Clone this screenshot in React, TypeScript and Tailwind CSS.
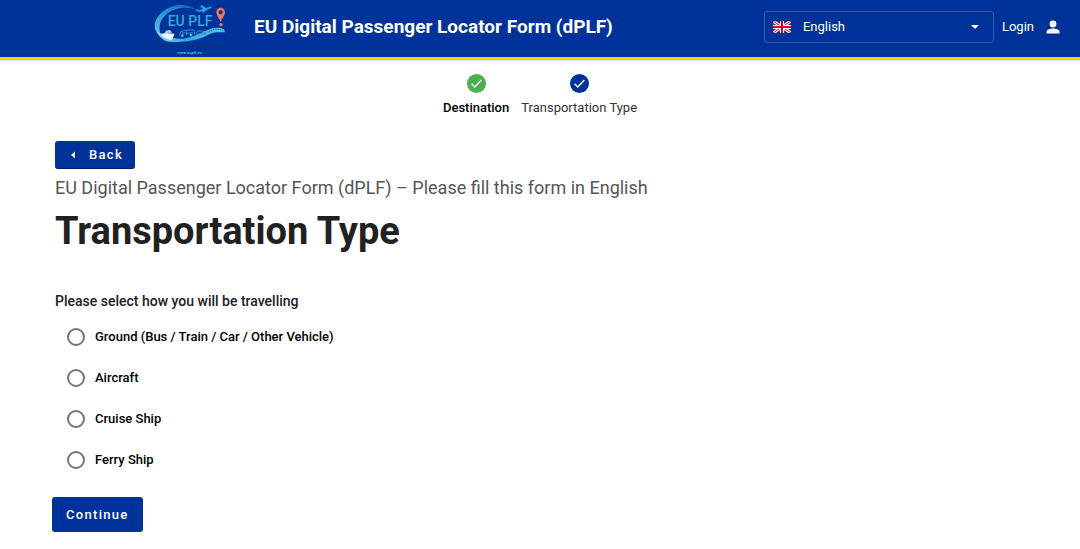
import { useState } from "react"

type Step = {
  label: string
  done: boolean
}

const steps: Step[] = [
  { label: "Destination", done: true },
  { label: "Transportation Type", done: false },
]

const transportOptions = [
  { value: "ground", label: "Ground (Bus / Train / Car / Other Vehicle)" },
  { value: "aircraft", label: "Aircraft" },
  { value: "cruise", label: "Cruise Ship" },
  { value: "ferry", label: "Ferry Ship" },
]

function Logo() {
  return (
    <svg viewBox="36 0 228 168" className="h-14 w-[76px] shrink-0" role="img" aria-label="EU PLF">
      <defs>
        <linearGradient id="ring" x1="1" y1="0" x2="0" y2="1">
          <stop offset="0" stopColor="#1560b8" />
          <stop offset="0.5" stopColor="#2398d2" />
          <stop offset="1" stopColor="#62c4e6" />
        </linearGradient>
        <linearGradient id="wave" x1="0" y1="0" x2="1" y2="0">
          <stop offset="0" stopColor="#8fdcf0" />
          <stop offset="0.4" stopColor="#2fa9da" />
          <stop offset="1" stopColor="#5cc3e8" />
        </linearGradient>
      </defs>
      {/* ring */}
      <path
        d="M170 26 C138 6 96 8 68 32 C38 56 36 90 66 108 C52 84 58 54 84 36 C108 18 142 16 170 26Z"
        fill="url(#ring)"
      />
      {/* wave */}
      <path
        d="M50 92 C58 108 70 118 84 122 C150 126 182 114 208 100 C224 92 240 94 254 94 C258 78 226 76 204 86 C170 102 138 118 104 112 C96 110 92 108 88 106Z"
        fill="url(#wave)"
      />
      <path d="M206 92 C222 82 238 82 248 90" fill="none" stroke="#003399" strokeWidth="2" strokeDasharray="4 3" />
      {/* ship */}
      <path d="M62 100 L76 96 L104 98 L96 116 C84 118 70 112 62 100Z" fill="#eef9fd" />
      <path d="M74 96 L78 89 L90 87 L96 95Z" fill="#a9dcf0" />
      {/* plane */}
      <path
        d="M166 26 L171 25 L177 28 L188 24 L180 14 L185 13 L199 21 L211 17 C216 16 217 19 213 21 L201 27 L190 35 L185 35 L190 30 L174 33Z"
        fill="#2ba3d6"
      />
      {/* train and car */}
      <path
        d="M118 106 L122 92 L136 88 L162 87 L164 100 M126 96 H160 M140 89 V102 M168 97 L174 90 H188 L196 95 V99 H168"
        fill="none"
        stroke="#2f8fcb"
        strokeWidth="3"
      />
      <circle cx="127" cy="104" r="4" fill="#5cbfe4" />
      <circle cx="153" cy="102" r="4" fill="#5cbfe4" />
      {/* map pin */}
      <path
        fillRule="evenodd"
        d="M242 20 C234 20 229 27 229 34 C229 44 238 51 242 63 C246 51 255 44 255 34 C255 27 250 20 242 20Z M242 28 A6 6 0 1 1 242 40 A6 6 0 1 1 242 28Z"
        fill="#ef765c"
      />
      <circle cx="243" cy="71" r="5" fill="#ef765c" />
      <text x="83" y="76" fontSize="42" fontFamily="Roboto, sans-serif" fontWeight="500" fill="#35a9dc">
        EU PLF
      </text>
      <text x="51" y="142" fontSize="11" fontFamily="Roboto, sans-serif" fontWeight="700" fill="#1c2f63">
        European Union Passenger Locator Form
      </text>
      <text x="112" y="160" fontSize="12" fontFamily="Roboto, sans-serif" fontWeight="700" fill="#45b8e6">
        www.euplf.eu
      </text>
    </svg>
  )
}

function UkFlag() {
  return (
    <svg
      viewBox="0 0 18 12"
      className="pointer-events-none absolute left-[9px] top-[10px] h-3 w-[18px]"
      aria-hidden="true"
    >
      <path d="M0 0H18V12H0Z" fill="#29337a" />
      <path d="M0 0L18 12M18 0L0 12" stroke="#fff" strokeWidth="3" />
      <path d="M0 0L18 12M18 0L0 12" stroke="#d80027" strokeWidth="1" />
      <path d="M9 0V12M0 6H18" stroke="#fff" strokeWidth="4" />
      <path d="M9 0V12M0 6H18" stroke="#d80027" strokeWidth="2" />
    </svg>
  )
}

function Header() {
  return (
    <header className="flex h-[60px] items-center border-b-[3px] border-[#ffcc00] bg-[#003399] pl-[152px] pr-5 text-white shadow">
      <Logo />
      <h2 className="ml-[26px] whitespace-nowrap pb-1 text-[19px] font-bold leading-6">
        EU Digital Passenger Locator Form (dPLF)
      </h2>
      <div className="ml-auto flex items-center pb-1">
        <div className="relative w-[230px]">
          <select
            aria-label="Language"
            className="h-8 w-full appearance-none rounded-[3px] border border-[#335cad] bg-[#003399] pl-[38px] pr-8 text-[13px] text-white"
          >
            <option>English</option>
          </select>
          <UkFlag />
          <svg
            viewBox="0 0 8 4"
            className="pointer-events-none absolute right-[15px] top-[14px] h-1 w-2"
            aria-hidden="true"
          >
            <path d="M0 0H8L4 4Z" fill="#fff" />
          </svg>
        </div>
        <a href="#login" className="ml-2 flex items-center gap-3 text-[13px] leading-5">
          Login
          <svg viewBox="0 0 14 14" className="h-[14px] w-[14px]" fill="#fff" aria-hidden="true">
            <circle cx="7" cy="4" r="3.4" />
            <path d="M0.5 13.4V11.6C0.5 9.4 4.6 8.4 7 8.4S13.5 9.4 13.5 11.6V13.4Z" />
          </svg>
        </a>
      </div>
    </header>
  )
}

function Stepper() {
  return (
    <ol className="flex justify-center gap-3 pt-[14px]">
      {steps.map((step) => (
        <li
          key={step.label}
          className={
            step.done
              ? "flex flex-col items-center gap-[5px] text-[13px] font-medium leading-5 text-black"
              : "flex flex-col items-center gap-[5px] text-[13px] leading-5 text-[#333]"
          }
        >
          <svg viewBox="0 0 19 19" className="h-[19px] w-[19px]" aria-hidden="true">
            <circle cx="9.5" cy="9.5" r="9.5" fill={step.done ? "#4caf50" : "#003399"} />
            <path d="M4.6 9.8L7.8 12.9L14.4 6.1" fill="none" stroke="#fff" strokeWidth="1.4" />
          </svg>
          {step.label}
        </li>
      ))}
    </ol>
  )
}

export default function App() {
  const [transport, setTransport] = useState("")

  return (
    <div className="bg-white font-['Roboto',sans-serif] text-[#212121]">
      <Header />
      <Stepper />

      <main className="px-[55px] pb-4 pt-[23px]">
        <button
          type="button"
          className="flex h-7 items-center gap-[14px] rounded-[3px] border-b border-[#001f66] bg-[#003399] pl-4 pr-3 text-[13px] font-medium tracking-widest text-white"
        >
          <svg viewBox="0 0 4 8" className="h-2 w-1" aria-hidden="true">
            <path d="M4 0.5V7.5L0 4Z" fill="#fff" />
          </svg>
          Back
        </button>

        <p className="mt-[7px] text-[18px] leading-6 text-[#555]">
          EU Digital Passenger Locator Form (dPLF) – Please fill this form in English
        </p>
        <h1 className="mt-[5px] text-[38px] font-bold leading-[52px] text-[#212121]">Transportation Type</h1>

        <form className="mt-[34px]" onSubmit={(e) => e.preventDefault()}>
          <fieldset>
            <legend className="text-[14px] font-medium leading-5">
              Please select how you will be travelling
            </legend>
            <div className="mt-[5px] pl-3">
              {transportOptions.map((option) => (
                <label
                  key={option.value}
                  className="flex h-[41px] w-fit items-center gap-[10px] text-[13px] font-medium text-black"
                >
                  <input
                    type="radio"
                    name="transport"
                    value={option.value}
                    checked={transport === option.value}
                    onChange={() => setTransport(option.value)}
                    className="h-[18px] w-[18px] appearance-none rounded-full border-2 border-[#757575] checked:border-[6px] checked:border-[#003399]"
                  />
                  {option.label}
                </label>
              ))}
            </div>
          </fieldset>
          <button
            type="submit"
            className="-ml-[3px] mt-[17px] h-[35px] rounded-[3px] bg-[#003399] px-[14px] text-[13px] font-medium tracking-widest text-white"
          >
            Continue
          </button>
        </form>
      </main>
    </div>
  )
}
